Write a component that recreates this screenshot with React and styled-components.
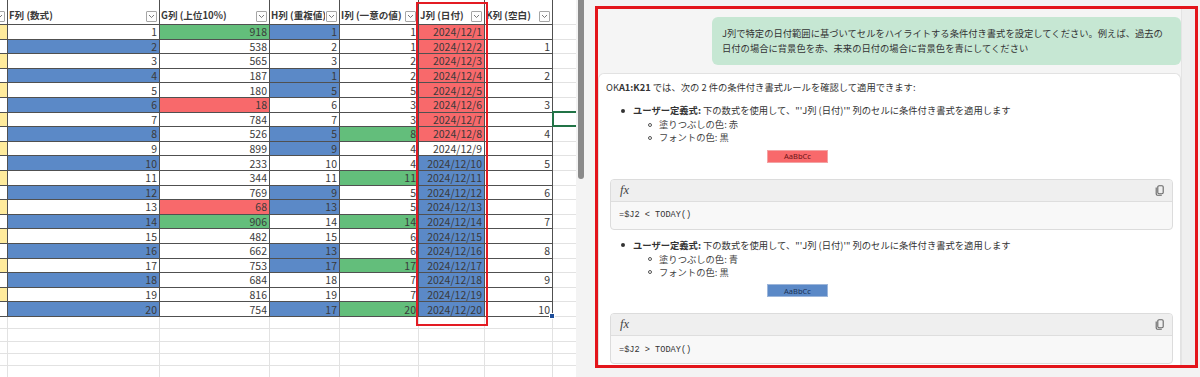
import React from "react";
import styled, { createGlobalStyle } from "styled-components";

const GlobalStyle = createGlobalStyle`
    html, body {
        margin: 0;
        padding: 0;
    }
    body {
        width: 1200px;
        height: 377px;
        overflow: hidden;
        background: #ffffff;
        font-family: "Noto Sans CJK JP", "Noto Sans", sans-serif;
        color: #333333;
    }
`;

const FILLS = {
    blue: "#5b89c7",
    green: "#63be7b",
    red: "#f8696b",
    yellow: "#ffeb9c",
    white: "#ffffff",
};

const Screen = styled.div`
    display: flex;
    width: 1200px;
    height: 377px;
    overflow: hidden;
`;

/* ---------- spreadsheet ---------- */

const SheetArea = styled.div`
    position: relative;
    flex: none;
    width: 576px;
    height: 377px;
    overflow: hidden;
`;

const Grid = styled.div`
    display: grid;
    grid-template-columns: 8px 152px 110px 70px 79px 66px 68px 24px;
    grid-template-rows: 25px repeat(20, 14.6px) repeat(6, 12.4px);
`;

const Cell = styled.div`
    box-sizing: border-box;
    display: flex;
    align-items: center;
    justify-content: flex-end;
    padding-right: 2px;
    overflow: hidden;
    white-space: nowrap;
    font-size: 10.5px;
    line-height: 13px;
    color: #3a3a3a;
    background: ${(p) => FILLS[p.$fill] || FILLS.white};
    border-right: 1px solid ${(p) => (p.$light ? "#e2e2e2" : "#505050")};
    border-bottom: 1px solid ${(p) => (p.$light ? "#e2e2e2" : "#505050")};
`;

const HeadCell = styled.div`
    box-sizing: border-box;
    display: flex;
    align-items: flex-end;
    justify-content: ${(p) => (p.$edge ? "flex-end" : "space-between")};
    gap: 1px;
    padding: 0 2px 2px 1px;
    overflow: hidden;
    white-space: nowrap;
    font-size: 9.6px;
    font-weight: 700;
    line-height: 13px;
    color: #3a3a3a;
    background: #ffffff;
    border-right: 1px solid ${(p) => (p.$light ? "#e2e2e2" : "#505050")};
    border-bottom: 1px solid ${(p) => (p.$light ? "#e2e2e2" : "#505050")};
`;

const HeadLabel = styled.span`
    overflow: hidden;
`;

const FilterButton = styled.span`
    flex: none;
    box-sizing: border-box;
    width: 11px;
    height: 11px;
    border: 1px solid #a6a6a6;
    border-radius: 1px;
    background: #fdfdfd;
    display: flex;
    align-items: center;
    justify-content: center;
`;

const RedMark = styled.div`
    position: absolute;
    left: 416px;
    top: 2px;
    width: 72px;
    height: 324px;
    box-sizing: border-box;
    border: 2.5px solid #e31b23;
    pointer-events: none;
`;

const ActiveCell = styled.div`
    position: absolute;
    left: 552px;
    top: 111px;
    width: 40px;
    height: 16px;
    box-sizing: border-box;
    border: 2px solid #217346;
`;

const FillHandle = styled.div`
    position: absolute;
    left: 549px;
    top: 313px;
    width: 4px;
    height: 4px;
    background: #1d4e9a;
    border: 1px solid #ffffff;
`;

const ScrollRail = styled.div`
    flex: none;
    width: 10px;
    background: #f3f3f3;
    display: flex;
    justify-content: center;
`;

const ScrollThumb = styled.div`
    width: 6px;
    height: 179px;
    background: #8a8a8a;
    border-radius: 0 0 3px 3px;
`;

/* ---------- copilot panel ---------- */

const Side = styled.div`
    flex: 1;
    display: flex;
    padding: 6px 2px 9px 9px;
    background: #f3f3f3;
`;

const Frame = styled.div`
    flex: 1;
    display: flex;
    border: 3px solid #e3151b;
    background: #f5f5f5;
    overflow: hidden;
`;

const Thread = styled.div`
    flex: 1;
    display: flex;
    flex-direction: column;
    padding-top: 8px;
    overflow: hidden;
    font-size: 9.3px;
    color: #333333;
`;

const PanelTrack = styled.div`
    flex: none;
    width: 13px;
    background: #efefef;
    border-left: 1px solid #e4e4e4;
`;

const UserBubble = styled.div`
    align-self: flex-end;
    width: 449px;
    padding: 9px 10px;
    background: #c6e7d3;
    border-radius: 6px;
    line-height: 15px;
    white-space: nowrap;
`;

const Card = styled.div`
    margin-top: 8px;
    flex: 1;
    padding: 6px 7px 0 7px;
    background: #ffffff;
    border: 1px solid #e2e2e2;
    border-bottom: none;
    border-radius: 6px 6px 0 0;
`;

const Para = styled.div`
    line-height: 15px;
    white-space: nowrap;
`;

const BulletRow = styled.div`
    display: flex;
    align-items: center;
    margin-top: 8px;
    padding-left: 15px;
    line-height: 15px;
    white-space: nowrap;
`;

const Dot = styled.span`
    flex: none;
    width: 4px;
    height: 4px;
    margin-right: 8px;
    border-radius: 50%;
    background: #333333;
`;

const SubRow = styled.div`
    display: flex;
    align-items: center;
    padding-left: 42px;
    line-height: 13px;
    white-space: nowrap;
    color: #444444;
`;

const Ring = styled.span`
    flex: none;
    box-sizing: border-box;
    width: 4px;
    height: 4px;
    margin-right: 7px;
    border: 1px solid #555555;
    border-radius: 50%;
`;

const Sample = styled.div`
    margin: 5.5px 0 0 161px;
    width: 61px;
    height: 13px;
    box-sizing: border-box;
    display: flex;
    align-items: center;
    justify-content: center;
    font-family: "Noto Sans", sans-serif;
    font-size: 7.5px;
    color: ${(p) => (p.$fill === "red" ? "#6d1416" : "#1c3255")};
    background: ${(p) => FILLS[p.$fill]};
    border: 1px solid ${(p) => (p.$fill === "red" ? "#f3a3a4" : "#9db6da")};
`;

const CodeBlock = styled.div`
    margin: 16px 0 0 4px;
    border: 1px solid #dcdcdc;
    border-radius: 4px;
    overflow: hidden;
    background: #f8f8f8;
`;

const CodeHead = styled.div`
    height: 21px;
    display: flex;
    align-items: center;
    justify-content: space-between;
    padding: 0 8px 0 9px;
    background: #efefef;
    border-bottom: 1px solid #dedede;
`;

const Fx = styled.span`
    font-family: "Liberation Serif", serif;
    font-style: italic;
    font-size: 12.5px;
    color: #444444;
`;

const CodeBody = styled.div`
    height: 27px;
    display: flex;
    align-items: center;
    padding-left: 8px;
    font-family: "Liberation Mono", "DejaVu Sans Mono", monospace;
    font-size: 8.6px;
    color: #333333;
`;

function Chevron() {
    return (
        <svg width="7" height="5" viewBox="0 0 7 5">
            <path d="M1 1 L3.5 3.5 L6 1" fill="none" stroke="#6a6a6a" strokeWidth="0.9" />
        </svg>
    );
}

function CopyIcon() {
    return (
        <svg width="9" height="11" viewBox="0 0 9 11">
            <path d="M1.2 2.5 V9 Q1.2 10.2 2.4 10.2 H6.8" fill="none" stroke="#666" strokeWidth="1.1" />
            <rect x="2.8" y="0.7" width="5.4" height="8" rx="1.2" fill="none" stroke="#666" strokeWidth="1.1" />
        </svg>
    );
}

const G = [918, 538, 565, 187, 180, 18, 784, 526, 899, 233, 344, 769, 68, 906, 482, 662, 753, 684, 816, 754];
const H = [1, 2, 3, 1, 5, 6, 7, 5, 9, 10, 11, 9, 13, 14, 15, 13, 17, 18, 19, 17];
const I = [1, 1, 2, 2, 5, 3, 3, 8, 4, 4, 11, 5, 5, 14, 6, 6, 17, 7, 7, 20];

const countOf = (list, v) => list.filter((x) => x === v).length;

function gFill(v) {
    if (v === 918 || v === 906) return "green";
    if (v === 18 || v === 68) return "red";
    return "white";
}

function jFill(day) {
    if (day < 9) return "red";
    if (day > 9) return "blue";
    return "white";
}

const headers = ["", "F列 (数式)", "G列 (上位10%)", "H列 (重複値)", "I列 (一意の値)", "J列 (日付)", "K列 (空白)"];

function Sheet() {
    const rows = Array.from({ length: 20 }, (_, i) => i);

    return (
        <SheetArea>
            <Grid>
                {headers.map((label, i) => (
                    <HeadCell key={"h" + i} $edge={i === 0}>
                        {label && <HeadLabel>{label}</HeadLabel>}
                        <FilterButton>
                            <Chevron />
                        </FilterButton>
                    </HeadCell>
                ))}
                <HeadCell $light />

                {rows.map((i) => {
                    const n = i + 1;
                    return (
                        <React.Fragment key={n}>
                            <Cell $fill={n % 2 ? "yellow" : "white"} />
                            <Cell $fill={n % 2 ? "white" : "blue"}>{n}</Cell>
                            <Cell $fill={gFill(G[i])}>{G[i]}</Cell>
                            <Cell $fill={countOf(H, H[i]) > 1 ? "blue" : "white"}>{H[i]}</Cell>
                            <Cell $fill={countOf(I, I[i]) === 1 ? "green" : "white"}>{I[i]}</Cell>
                            <Cell $fill={jFill(n)}>2024/12/{n}</Cell>
                            <Cell>{n % 2 ? "" : n / 2}</Cell>
                            <Cell $light />
                        </React.Fragment>
                    );
                })}

                {Array.from({ length: 6 * 8 }, (_, k) => (
                    <Cell key={"e" + k} $light />
                ))}
            </Grid>
            <RedMark />
            <ActiveCell />
            <FillHandle />
        </SheetArea>
    );
}

function Rule({ fill, colorName, formula }) {
    return (
        <>
            <BulletRow>
                <Dot />
                <span>
                    <b>ユーザー定義式:</b> 下の数式を使用して、"'J列 (日付)'" 列のセルに条件付き書式を適用します
                </span>
            </BulletRow>
            <SubRow>
                <Ring />
                塗りつぶしの色: {colorName}
            </SubRow>
            <SubRow>
                <Ring />
                フォントの色: 黒
            </SubRow>
            <Sample $fill={fill}>AaBbCc</Sample>
            <CodeBlock>
                <CodeHead>
                    <Fx>fx</Fx>
                    <CopyIcon />
                </CodeHead>
                <CodeBody>{formula}</CodeBody>
            </CodeBlock>
        </>
    );
}

function Copilot() {
    return (
        <Side>
            <Frame>
                <Thread>
                    <UserBubble>
                        J列で特定の日付範囲に基づいてセルをハイライトする条件付き書式を設定してください。例えば、過去の
                        <br />
                        日付の場合に背景色を赤、未来の日付の場合に背景色を青にしてください
                    </UserBubble>
                    <Card>
                        <Para>
                            OK<b>A1:K21</b> では、次の 2 件の条件付き書式ルールを確認して適用できます:
                        </Para>
                        <Rule fill="red" colorName="赤" formula="=$J2 < TODAY()" />
                        <Rule fill="blue" colorName="青" formula="=$J2 > TODAY()" />
                    </Card>
                </Thread>
                <PanelTrack />
            </Frame>
        </Side>
    );
}

export default function App() {
    return (
        <>
            <GlobalStyle />
            <Screen>
                <Sheet />
                <ScrollRail>
                    <ScrollThumb />
                </ScrollRail>
                <Copilot />
            </Screen>
        </>
    );
}
